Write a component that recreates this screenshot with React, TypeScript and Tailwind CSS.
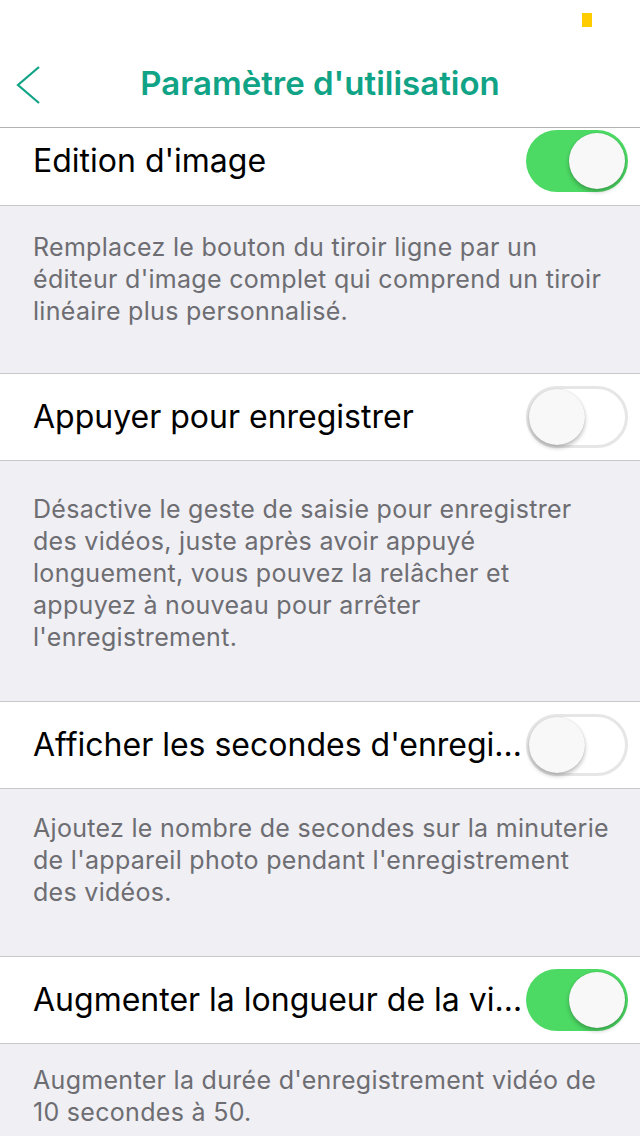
import React, { useState } from "react";

type Setting = {
    title: string;
    lines: string[];
    enabled: boolean;
    descPad: string;
};

// lines are split the same way the device wraps them
const initialSettings: Setting[] = [
    {
        title: "Edition d'image",
        lines: [
            "Remplacez le bouton du tiroir ligne par un",
            "éditeur d'image complet qui comprend un tiroir",
            "linéaire plus personnalisé.",
        ],
        enabled: true,
        descPad: "pt-[25px] pb-[46px]",
    },
    {
        title: "Appuyer pour enregistrer",
        lines: [
            "Désactive le geste de saisie pour enregistrer",
            "des vidéos, juste après avoir appuyé",
            "longuement, vous pouvez la relâcher et",
            "appuyez à nouveau pour arrêter",
            "l'enregistrement.",
        ],
        enabled: false,
        descPad: "pt-[32px] pb-[48px]",
    },
    {
        title: "Afficher les secondes d'enregistrement",
        lines: [
            "Ajoutez le nombre de secondes sur la minuterie",
            "de l'appareil photo pendant l'enregistrement",
            "des vidéos.",
        ],
        enabled: false,
        descPad: "pt-[23px] pb-[48px]",
    },
    {
        title: "Augmenter la longueur de la vidéo",
        lines: ["Augmenter la durée d'enregistrement vidéo de", "10 secondes à 50."],
        enabled: true,
        descPad: "pt-[20px] pb-[40px]",
    },
];

const Toggle = ({ on, onClick }: { on: boolean; onClick: () => void }) => {
    return (
        <button
            onClick={onClick}
            className={`relative shrink-0 w-[102px] h-[62px] rounded-full ${
                on ? "bg-[#4cd964]" : "bg-white border-[3px] border-[#e6e6e6]"
            }`}
        >
            <span
                className={`absolute top-1/2 -translate-y-1/2 w-[56px] h-[56px] rounded-full bg-[#f8f8f8] shadow-[0_3px_4px_rgba(0,0,0,0.25),0_0_1px_rgba(0,0,0,0.2)] ${
                    on ? "right-[3px]" : "left-0"
                }`}
            />
        </button>
    );
};

const App = () => {
    const [settings, setSettings] = useState(initialSettings);

    const flip = (i: number) => {
        setSettings((prev) =>
            prev.map((s, idx) => (idx === i ? { ...s, enabled: !s.enabled } : s))
        );
    };

    return (
        <div
            className="w-[640px] h-[1136px] overflow-hidden bg-[#efeff4] flex flex-col"
            style={{ fontFamily: 'Inter, "Liberation Sans", Arial, sans-serif' }}
        >
            {/* status bar */}
            <div className="h-[40px] bg-white flex justify-end items-center pr-[48px] shrink-0">
                <div className="w-[10px] h-[14px] bg-[#ffcc00]" />
            </div>

            {/* nav bar */}
            <div className="h-[88px] bg-white border-b border-[#b2b2b2] flex items-center relative shrink-0">
                <button className="absolute left-[15px] top-[26px] w-[26px] h-[38px]">
                    <svg viewBox="0 0 26 38" className="w-full h-full">
                        <path
                            d="M24 1 L3 19 L24 37"
                            fill="none"
                            stroke="#10a386"
                            strokeWidth="2.2"
                        />
                    </svg>
                </button>
                <h1 className="w-full text-center text-[33px] font-semibold text-[#10a386] leading-none">
                    Paramètre d'utilisation
                </h1>
            </div>

            <div className="flex flex-col">
                {settings.map((s, i) => (
                    <div key={s.title}>
                        <div
                            className={`bg-white flex items-center pl-[33px] pr-[12px] border-b border-[#c8c7cc] ${
                                i === 0
                                    ? "h-[78px] items-start pt-[2px]"
                                    : "h-[88px] border-t"
                            }`}
                        >
                            <span
                                className={`flex-1 min-w-0 truncate text-[32px] text-black ${
                                    i === 0 ? "leading-[62px]" : ""
                                }`}
                            >
                                {s.title}
                            </span>
                            <Toggle on={s.enabled} onClick={() => flip(i)} />
                        </div>
                        <div
                            className={`pl-[33px] pr-[16px] text-[25px] tracking-[0.3px] leading-[32px] text-[#6d6d72] ${s.descPad}`}
                        >
                            {s.lines.map((line) => (
                                <p key={line} className="whitespace-nowrap">
                                    {line}
                                </p>
                            ))}
                        </div>
                    </div>
                ))}
            </div>
        </div>
    );
};

export default App;
